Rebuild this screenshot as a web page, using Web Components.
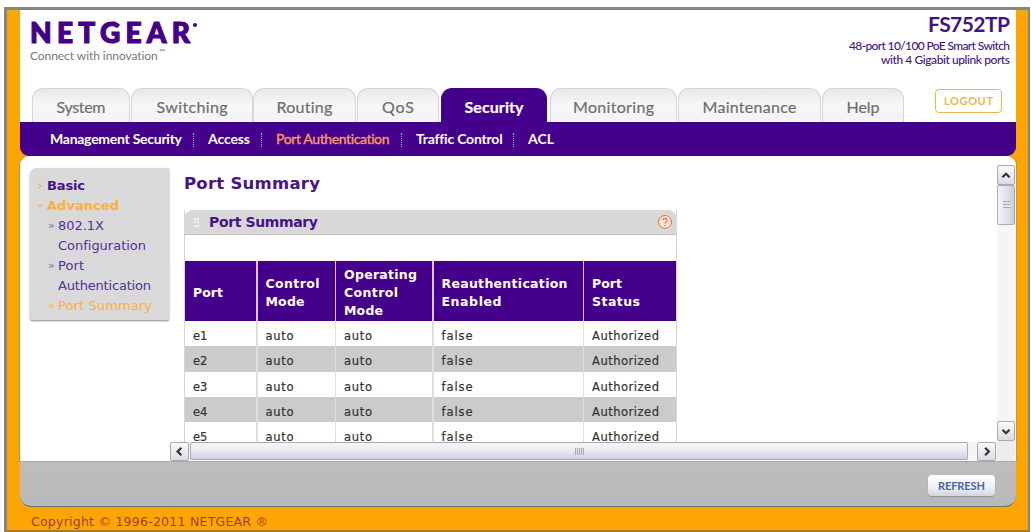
<!DOCTYPE html>
<html lang="en">
<head>
<meta charset="utf-8">
<title>NETGEAR FS752TP</title>
<style>
  html, body {
    margin: 0;
    height: 532px;
    overflow: hidden;
    background: #fff;
  }

  body {
    --purple: #45008b;
    --orange: #fca503;
    font-family: Lato, "Liberation Sans", sans-serif;
  }
</style>
</head>
<body>
<switch-app></switch-app>

<script>
/**
 * FitText: spreads one line of text over the width given in its "w" attribute
 */
class FitText extends HTMLElement {
  constructor() {
    super();
    this.attachShadow({ mode: 'open' });
  }

  connectedCallback() {
    const width = Number(this.getAttribute('w'));
    this.shadowRoot.innerHTML = `
      <style>
        :host { display: inline-block; white-space: nowrap; width: ${width}px; text-align: left; }
      </style>
      <span><slot></slot></span>
    `;
    const span = this.shadowRoot.querySelector('span');
    const natural = span.getBoundingClientRect().width;
    const count = this.textContent.length;
    if (count > 1) {
      span.style.letterSpacing = `${(width - natural) / (count - 1)}px`;
    }
  }
}

/**
 * PageHeader: brand, model name and the main tabs
 */
class PageHeader extends HTMLElement {
  constructor() {
    super();
    this.attachShadow({ mode: 'open' });
  }

  connectedCallback() {
    this.shadowRoot.innerHTML = `
      <style>
        :host {
          display: flex;
          flex-direction: column;
          justify-content: space-between;
          height: 112px;
          background: #fff;
        }

        .top {
          display: flex;
          justify-content: space-between;
          padding: 5px 6px 0 10px;
        }

        .logo {
          display: flex;
          margin-top: 2px;
          height: 31px;
          line-height: 31px;
          font-size: 28px;
          font-weight: 900;
          color: var(--purple);
          -webkit-text-stroke: 1.2px var(--purple);
        }

        .dot {
          width: 4px;
          height: 4px;
          margin: 6px 0 0 3px;
          border-radius: 50%;
          background: var(--purple);
        }

        .tagline {
          display: flex;
          height: 16px;
          line-height: 15px;
          font-size: 12px;
          color: #77777b;
        }

        .tagline small {
          font-size: 8px;
          line-height: 8px;
          margin-left: 1px;
        }

        .model {
          text-align: right;
          color: #3f1683;
          font-size: 12px;
          font-weight: 500;
          line-height: 14px;
        }

        .model div { height: 14px; }

        .model .name {
          height: 24px;
          line-height: 17px;
          font-size: 21px;
          font-weight: 700;
        }

        .tabs {
          display: flex;
          align-items: flex-end;
          padding-left: 12px;
        }

        .logout {
          box-sizing: border-box;
          width: 67px;
          height: 24px;
          margin: 0 0 9px 31px;
          border: 1px solid #efb64b;
          border-radius: 4px;
          display: flex;
          align-items: center;
          justify-content: center;
          font-size: 11px;
          font-weight: 700;
          line-height: 24px;
          color: #efb64b;
        }
      </style>
      <div class="top">
        <div>
          <div class="logo"><fit-text w="160">NETGEAR</fit-text><i class="dot"></i></div>
          <div class="tagline"><fit-text w="128">Connect with innovation</fit-text><small>™</small></div>
        </div>
        <div class="model">
          <div class="name"><fit-text w="82">FS752TP</fit-text></div>
          <div><fit-text w="161">48-port 10/100 PoE Smart Switch</fit-text></div>
          <div><fit-text w="129">with 4 Gigabit uplink ports</fit-text></div>
        </div>
      </div>
      <div class="tabs">
        <nav-tab style="width: 98px; margin-right: 1px"><fit-text w="49">System</fit-text></nav-tab>
        <nav-tab style="width: 122px"><fit-text w="71">Switching</fit-text></nav-tab>
        <nav-tab style="width: 103px; margin-right: 1px"><fit-text w="56">Routing</fit-text></nav-tab>
        <nav-tab style="width: 82px; margin-right: 2px"><fit-text w="32">QoS</fit-text></nav-tab>
        <nav-tab active style="width: 106px; margin-right: 3px"><fit-text w="59">Security</fit-text></nav-tab>
        <nav-tab style="width: 127px; margin-right: 1px"><fit-text w="81">Monitoring</fit-text></nav-tab>
        <nav-tab style="width: 143px; margin-right: 1px"><fit-text w="94">Maintenance</fit-text></nav-tab>
        <nav-tab style="width: 82px"><fit-text w="33">Help</fit-text></nav-tab>
        <div class="logout"><fit-text w="49">LOGOUT</fit-text></div>
      </div>
    `;
  }
}

/**
 * NavTab: one tab of the main navigation
 */
class NavTab extends HTMLElement {
  constructor() {
    super();
    this.attachShadow({ mode: 'open' }).innerHTML = `
      <style>
        :host {
          display: block;
          box-sizing: border-box;
          height: 34px;
          line-height: 35px;
          text-align: center;
          font-size: 16px;
          color: #6d6e70;
          border: 1px solid #d6d6d6;
          border-bottom: 0;
          border-radius: 11px 11px 0 0;
          background: linear-gradient(#e8e8e8, #f7f7f7 50%, #f3f3f3);
          -webkit-text-stroke: 0.2px;
        }

        :host([active]) {
          color: #fff;
          font-weight: 700;
          border-color: var(--purple);
          background: var(--purple);
        }
      </style>
      <slot></slot>
    `;
  }
}

/**
 * SubNav: second level links below the tabs
 */
class SubNav extends HTMLElement {
  constructor() {
    super();
    this.attachShadow({ mode: 'open' });
  }

  connectedCallback() {
    this.shadowRoot.innerHTML = `
      <style>
        :host {
          display: flex;
          align-items: center;
          box-sizing: border-box;
          height: 34px;
          padding: 0 0 2px 30px;
          font-size: 14px;
          font-weight: 700;
          color: #fff;
          background: var(--purple);
          border-radius: 0 0 9px 9px;
        }

        i {
          height: 14px;
          border-left: 1px dotted #b79bd8;
          margin: 3px 14.500px 0 10.500px;
        }

        .current { color: #f59a62; font-weight: 500; -webkit-text-stroke: 0.3px; }
      </style>
      <fit-text w="132">Management Security</fit-text><i></i>
      <fit-text w="42">Access</fit-text><i></i>
      <fit-text w="114" class="current">Port Authentication</fit-text><i></i>
      <fit-text w="86">Traffic Control</fit-text><i></i>
      <fit-text w="26">ACL</fit-text>
    `;
  }
}

/**
 * SideMenu: grey menu at the left of the content
 */
class SideMenu extends HTMLElement {
  constructor() {
    super();
    this.attachShadow({ mode: 'open' });
  }

  connectedCallback() {
    this.shadowRoot.innerHTML = `
      <style>
        :host {
          display: block;
          box-sizing: border-box;
          width: 139px;
          height: 152px;
          padding: 8px 0 0 7px;
          background: #d9d9d9;
          border-radius: 7px 0 0 2px;
          box-shadow: 0 1px 2px #888;
          font: 13px/20px "DejaVu Sans", sans-serif;
          color: #54309a;
        }

        div { display: flex; height: 20px; }
        b { display: flex; color: #45138a; }
        svg { width: 6px; height: 6px; margin: 7px 4px 0 0; fill: none; stroke: #f7a92c; }
        .open, .open b, .current { color: #f7b13c; }
        .sub { padding-left: 11px; }
        .sub i { width: 10px; font: 11px/19px "DejaVu Sans", sans-serif; color: #77739b; }
        .sub.current i { color: #f7b13c; }
        .wrap { padding-left: 21px; }
      </style>
      <div><svg><path d="M1 0.500L4 3L1 5.500"/></svg><b><fit-text w="38">Basic</fit-text></b></div>
      <div class="open"><svg><path d="M0.500 1L3 4L5.500 1"/></svg><b><fit-text w="72">Advanced</fit-text></b></div>
      <div class="sub"><i>»</i><fit-text w="46">802.1X</fit-text></div>
      <div class="wrap"><fit-text w="88">Configuration</fit-text></div>
      <div class="sub"><i>»</i><fit-text w="26">Port</fit-text></div>
      <div class="wrap"><fit-text w="93">Authentication</fit-text></div>
      <div class="sub current"><i>»</i><fit-text w="94">Port Summary</fit-text></div>
    `;
  }
}

/**
 * PortSummary: title, panel bar and table of ports
 */
class PortSummary extends HTMLElement {
  constructor() {
    super();
    this.attachShadow({ mode: 'open' });
    this.ports = ['e1', 'e2', 'e3', 'e4', 'e5'];
  }

  connectedCallback() {
    const rows = this.ports.map((port) => `
      <div class="row">
        <span>${port}</span>
        <span><fit-text w="28">auto</fit-text></span>
        <span><fit-text w="28">auto</fit-text></span>
        <span><fit-text w="31">false</fit-text></span>
        <span><fit-text w="67">Authorized</fit-text></span>
      </div>
    `).join('');

    this.shadowRoot.innerHTML = `
      <style>
        :host {
          display: block;
          box-sizing: border-box;
          height: 286px;
          padding: 17px 0 0 14px;
          overflow: hidden;
          font-family: "DejaVu Sans", sans-serif;
        }

        h1 {
          margin: 0 0 15px;
          height: 22px;
          font-size: 16.500px;
          line-height: 22px;
          color: #45138a;
        }

        .panel {
          box-sizing: border-box;
          width: 493px;
          border: 1px solid #d5d5d5;
          border-top: 0;
        }

        .bar {
          display: flex;
          align-items: center;
          height: 25px;
          margin: 0 -1px;
          padding: 0 4px 0 10px;
          box-sizing: border-box;
          background: #d8d8d8;
          border-bottom: 1px solid #c4c4c4;
          border-radius: 9px 9px 0 0;
          font-size: 14px;
          font-weight: 700;
          color: #45138a;
        }

        .grip { width: 5px; height: 9px; margin-right: 10px; border: dotted #f2f2f2; border-width: 1px 2px; box-sizing: border-box; }
        .help { margin-left: auto; width: 16px; height: 16px; }

        .row, .head {
          display: grid;
          grid-template-columns: 71px 77px 96px 149px 92px;
          grid-template-rows: 100%;
          column-gap: 1.500px;
          background: #dedede;
        }

        .head {
          margin-top: 26px;
          height: 60px;
          background: #d9c8ea;
          font-size: 12.500px;
          font-weight: 700;
          line-height: 18px;
          color: #fff;
        }

        .head div {
          display: flex;
          flex-direction: column;
          justify-content: center;
          padding: 3px 0 0 8px;
          box-sizing: border-box;
          background: var(--purple);
        }

        .row {
          height: 25.300px;
          font-size: 11.500px;
          line-height: 20px;
          color: #333;
        }

        .row span { box-sizing: border-box; background: #fff; padding: 5px 0 0 8px; overflow: hidden; -webkit-text-stroke: 0.2px; }
        .row:nth-child(odd) span { background: #cbcbcb; }
      </style>
      <h1><fit-text w="136">Port Summary</fit-text></h1>
      <div class="panel">
        <div class="bar">
          <i class="grip"></i>
          <fit-text w="109">Port Summary</fit-text>
          <svg class="help" viewBox="0 0 16 16" fill="none" stroke="#e66a42">
            <circle cx="8" cy="8" r="6.500" fill="#fbe5d8"/>
            <path d="M5.800 6.200C6 3.800 10.200 3.900 10 6.300C9.900 7.600 8 7.800 8 9.600M8 11V12.300" stroke-width="1.200"/>
          </svg>
        </div>
        <div class="table">
          <div class="head">
            <div><fit-text w="30">Port</fit-text></div>
            <div><fit-text w="54">Control</fit-text><fit-text w="39">Mode</fit-text></div>
            <div><fit-text w="73">Operating</fit-text><fit-text w="54">Control</fit-text><fit-text w="39">Mode</fit-text></div>
            <div><fit-text w="126">Reauthentication</fit-text><fit-text w="60">Enabled</fit-text></div>
            <div><fit-text w="30">Port</fit-text><fit-text w="48">Status</fit-text></div>
          </div>
          ${rows}
        </div>
      </div>
    `;
  }
}

/**
 * ScrollBar: drawn scroll bar, vertical or horizontal
 */
class ScrollBar extends HTMLElement {
  constructor() {
    super();
    this.attachShadow({ mode: 'open' });
  }

  connectedCallback() {
    const vertical = this.hasAttribute('vertical');
    const back = vertical ? 'M5 11.500L9 7.500L13 11.500' : 'M11 5L7 9L11 13';
    const next = vertical ? 'M5 7.500L9 11.500L13 7.500' : 'M7.500 5L11.500 9L7.500 13';

    this.shadowRoot.innerHTML = `
      <style>
        :host {
          display: flex;
          box-sizing: border-box;
          height: 19px;
          padding-right: 1px;
          background: #f5f5f6;
        }

        :host([vertical]) {
          flex-direction: column;
          height: auto;
          width: 18px;
          padding: 0;
        }

        .button, .thumb {
          box-sizing: border-box;
          border: 1px solid #aaaab2;
          border-radius: 2px;
          background: linear-gradient(#fafafb, #dcdce2);
        }

        .button { width: 19px; height: 19px; flex: none; }
        :host([vertical]) .button { width: 18px; height: 20px; }
        .button svg { display: block; width: 100%; height: 100%; fill: none; stroke: #333; stroke-width: 2.400; }

        .thumb {
          display: flex;
          align-items: center;
          justify-content: center;
          width: 778px;
          height: 18px;
          margin-left: 1px;
          background: linear-gradient(#f6f6fa, #e9e9f1 50%, #cfcfdf);
        }

        :host([vertical]) .thumb {
          width: 18px;
          height: 40px;
          margin: 0;
          background: linear-gradient(90deg, #f4f4f8, #dfe0e8 60%, #cbcbd8);
        }

        .grip { width: 9px; height: 7px; background: repeating-linear-gradient(90deg, #aaaab4 0 1px, #e2e2ea 1px 2px); }
        :host([vertical]) .grip { width: 7px; height: 8px; background: repeating-linear-gradient(#aaaab4 0 1px, #e2e2ea 1px 3px); }
        .space { flex: 1; }
      </style>
      <div class="button"><svg viewBox="0 0 18 18"><path d="${back}"/></svg></div>
      <div class="thumb"><i class="grip"></i></div>
      <div class="space"></div>
      <div class="button"><svg viewBox="0 0 18 18"><path d="${next}"/></svg></div>
    `;
  }
}

/**
 * SwitchApp: frame of the whole page
 */
class SwitchApp extends HTMLElement {
  constructor() {
    super();
    this.attachShadow({ mode: 'open' });
  }

  connectedCallback() {
    this.shadowRoot.innerHTML = `
      <style>
        :host {
          display: block;
          box-sizing: border-box;
          width: 1026px;
          height: 525px;
          margin: 7px 0 0 4px;
          border: 3px solid #858585;
          border-bottom: 2px solid #a77c2c;
          border-right-width: 2px;
          padding: 0 12px 0 13px;
          background: var(--orange);
        }

        .content {
          display: grid;
          grid-template-columns: 150px 827px 18px;
          height: 305px;
          background: #fff;
          border-radius: 9px 9px 0 0;
          box-shadow: 1px 0 0 #c99235, -1px 0 0 #c99235;
        }

        .left { padding: 12px 0 0 10px; }
        .right { display: flex; flex-direction: column; }
        .right scroll-bar { height: 276px; margin-top: 9px; }
        .corner { flex: 1; background: #ededed; }

        footer {
          display: flex;
          justify-content: flex-end;
          box-sizing: border-box;
          height: 46px;
          padding: 13px 21px 0 0;
          border-top: 1px solid #aaa;
          border-bottom: 1px solid #77736a;
          border-radius: 0 0 11px 11px;
          background: linear-gradient(#bdbdbd, #bababa 75%, #b3bac0);
        }

        .refresh {
          width: 67px;
          height: 21px;
          line-height: 21px;
          text-align: center;
          border-radius: 4px;
          background: linear-gradient(#fff, #eeeef4 60%, #d4d4df);
          box-shadow: 0 1px 1px #929292;
          font-size: 11px;
          font-weight: 700;
          color: #4a65a0;
        }

        .copy {
          padding-left: 11px;
          font: 12.500px/29px "DejaVu Sans", sans-serif;
          color: #a73c2a;
        }
      </style>
      <page-header></page-header>
      <sub-nav></sub-nav>
      <div class="content">
        <div class="left"><side-menu></side-menu></div>
        <div>
          <port-summary></port-summary>
          <scroll-bar></scroll-bar>
        </div>
        <div class="right">
          <scroll-bar vertical></scroll-bar>
          <div class="corner"></div>
        </div>
      </div>
      <footer><div class="refresh"><fit-text w="47">REFRESH</fit-text></div></footer>
      <div class="copy"><fit-text w="237">Copyright © 1996-2011 NETGEAR ®</fit-text></div>
    `;
  }
}

customElements.define('nav-tab', NavTab);
customElements.define('switch-app', SwitchApp);
customElements.define('page-header', PageHeader);
customElements.define('sub-nav', SubNav);
customElements.define('side-menu', SideMenu);
customElements.define('port-summary', PortSummary);
customElements.define('scroll-bar', ScrollBar);
customElements.define('fit-text', FitText);
</script>
</body>
</html>
